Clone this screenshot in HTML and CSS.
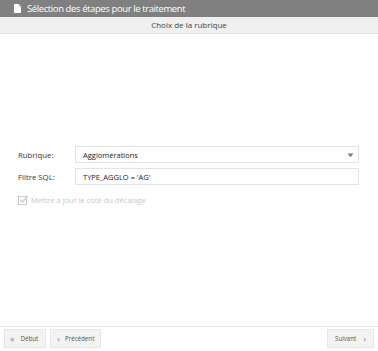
FILE: index.html
```html
<!DOCTYPE html>
<html lang="fr">
<head>
  <meta charset="UTF-8">
  <title>Sélection des étapes pour le traitement</title>
  <link rel="stylesheet" href="styles.css">
</head>
<body>
  <div class="window">
    <div class="titlebar">
      <svg class="doc-icon" width="7" height="9" viewBox="0 0 7 9">
        <path d="M0 0h4.5l2.5 2.5V9H0z" fill="#fff"/>
        <path d="M4.5 0v2.5H7" fill="#ccc"/>
      </svg>
      <span>Sélection des étapes pour le traitement</span>
    </div>
    <div class="step-title">Choix de la rubrique</div>

    <div class="content">
      <div class="form-row">
        <label>Rubrique:</label>
        <div class="select">
          <span>Agglomérations</span>
          <svg class="arrow" width="5" height="4" viewBox="0 0 5 4">
            <rect x="0" y="0" width="5" height="0.8" fill="#999"/>
            <path d="M0 1.3h5L2.5 4z" fill="#666"/>
          </svg>
        </div>
      </div>
      <div class="form-row">
        <label>Filtre SQL:</label>
        <div class="input">TYPE_AGGLO = 'AG'</div>
      </div>
      <div class="check-row">
        <svg width="10" height="10" viewBox="0 0 10 10">
          <rect x="0.5" y="1.5" width="8" height="8" fill="none" stroke="#ccc"/>
          <path d="M2.5 5l2 2L9.5 1" fill="none" stroke="#ccc" stroke-width="1.2"/>
        </svg>
        <span>Mettre à jour le coté du décalage</span>
      </div>
    </div>

    <div class="footer">
      <div class="nav-left">
        <button class="btn first"><span class="ico">«</span>Début</button>
        <button class="btn prev"><span class="ico">‹</span>Précédent</button>
      </div>
      <button class="btn next">Suivant<span class="ico right">›</span></button>
    </div>
  </div>
</body>
</html>
```

FILE: styles.css
```css
* {
  box-sizing: border-box;
  margin: 0;
  padding: 0;
}

body {
  font-family: 'Open Sans', sans-serif;
  background: #fff;
  color: #333;
}

.window {
  width: 378px;
  height: 351px;
  display: flex;
  flex-direction: column;
}

.titlebar {
  height: 17px;
  background: #808080;
  color: #fff;
  font-size: 9.5px;
  letter-spacing: -0.4px;
  display: flex;
  align-items: center;
  padding-left: 14px;
  gap: 6px;
}

.step-title {
  height: 17px;
  background: #f0f0f0;
  border-bottom: 1px solid #e0e0e0;
  color: #444;
  font-size: 8px;
  text-align: center;
  line-height: 16px;
}

.content {
  flex: 1;
  padding: 112px 19px 0 18px;
}

.form-row {
  display: flex;
  align-items: center;
  margin-bottom: 5px;
  font-size: 7.8px;
}

.form-row label {
  width: 57px;
  color: #333;
}

.select,
.input {
  flex: 1;
  height: 17px;
  border: 1px solid #e3e3e3;
  display: flex;
  align-items: center;
  padding-left: 7px;
  padding-right: 5px;
  font-size: 7.5px;
  color: #222;
}

.select span {
  flex: 1;
}

.check-row {
  display: flex;
  align-items: center;
  gap: 3px;
  margin-top: 10px;
  font-size: 7.5px;
  color: #c8c8c8;
}

.footer {
  height: 25px;
  border-top: 1px solid #e8e8e8;
  display: flex;
  justify-content: space-between;
  align-items: flex-start;
  padding: 2px 4px 0 4px;
}

.nav-left {
  display: flex;
  gap: 4px;
}

.btn {
  font-family: 'Open Sans', sans-serif;
  font-size: 6.2px;
  color: #555;
  background: #f3f3f3;
  border: 1px solid #e6e6e6;
  height: 19px;
  padding: 0 7px;
  display: flex;
  align-items: center;
}

.btn.first {
  padding-left: 5px;
}

.btn.prev {
  padding: 0 6px 0 6px;
}

.ico {
  color: #888;
  font-size: 9px;
  margin-right: 5px;
}

.btn.first .ico {
  margin-right: 6px;
}

.ico.right {
  margin-right: 0;
  margin-left: 7px;
}
```
